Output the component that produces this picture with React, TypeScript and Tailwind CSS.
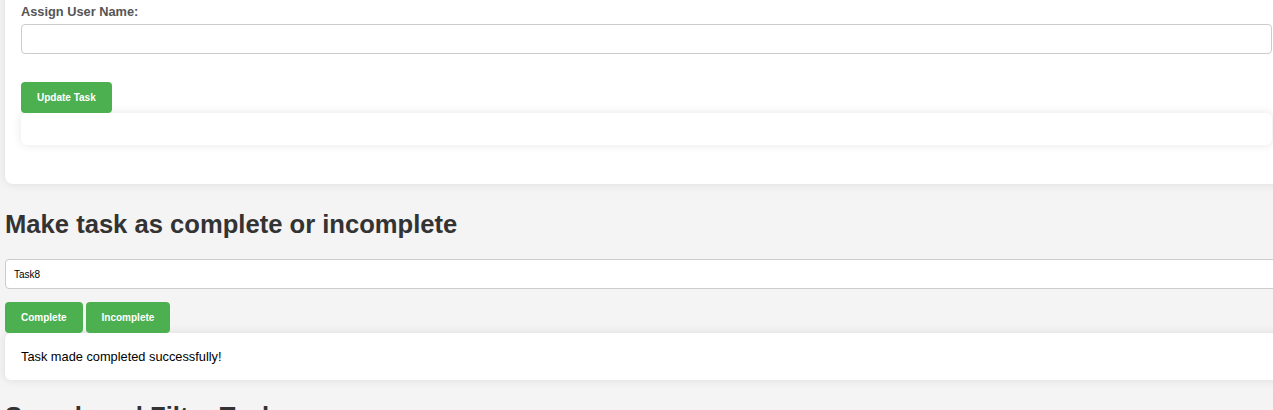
import React from "react";

const FONT = "font-['Liberation_Sans',Arial,sans-serif]";

function GreenButton({ children }: { children: React.ReactNode }) {
  return (
    <button
      type="button"
      className="h-[31px] px-4 rounded-[4px] bg-[#4caf50] text-white text-[10px] font-bold leading-none"
    >
      {children}
    </button>
  );
}

export default function App() {
  return (
    <div className={`w-[1273px] h-[410px] overflow-hidden bg-[#f4f4f4] ${FONT}`}>
      <div className="ml-[5px] w-[1283px]">
        {/* update task card (scrolled, top is off screen) */}
        <div className="-mt-[10px] pt-[14px] px-4 pb-[39px] bg-white rounded-lg shadow-[0_0_10px_rgba(0,0,0,0.1)]">
          <label className="block text-[12.8px] leading-[16px] font-bold text-[#555]">
            Assign User Name:
          </label>
          <input
            type="text"
            className="mt-[4px] block w-full h-[30px] border border-[#ccc] rounded-[4px] bg-white"
          />
          <div className="mt-[28px]">
            <GreenButton>Update Task</GreenButton>
          </div>
          <div className="h-[32px] bg-white rounded-md shadow-[0_0_10px_rgba(0,0,0,0.1)]" />
        </div>

        <h2 className="mt-[25px] text-[25.6px] leading-[30px] font-bold text-[#333]">
          Make task as complete or incomplete
        </h2>
        <input
          type="text"
          defaultValue="Task8"
          className="mt-[20px] block w-full h-[30px] pl-[8px] border border-[#ccc] rounded-[4px] bg-white text-[10px] text-black"
        />
        <div className="mt-[13px] flex gap-[3px]">
          <GreenButton>Complete</GreenButton>
          <GreenButton>Incomplete</GreenButton>
        </div>
        <div className="px-4 py-4 bg-white rounded-md shadow-[0_0_10px_rgba(0,0,0,0.1)] text-[12.8px] leading-[15px] text-black">
          Task made completed successfully!
        </div>

        <h2 className="mt-[21px] text-[25.6px] leading-[30px] font-bold text-[#333]">
          Search and Filter Tasks
        </h2>
      </div>
    </div>
  );
}
